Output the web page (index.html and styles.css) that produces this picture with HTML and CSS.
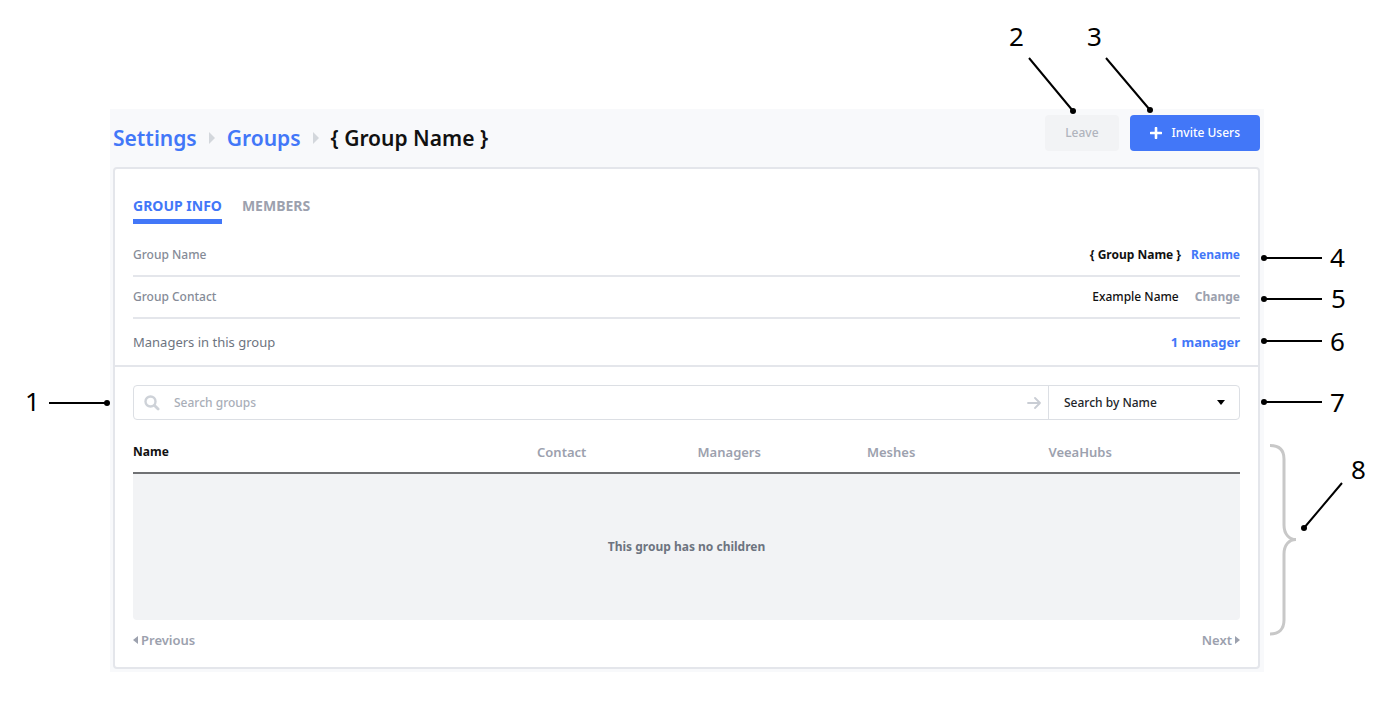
FILE: index.html
```
<!DOCTYPE html>
<html lang="en">
<head>
    <meta charset="UTF-8">
    <meta name="viewport" content="width=device-width, initial-scale=1.0">
    <title>Group settings</title>
    <link rel="stylesheet" href="styles.css">
</head>
<body>
    <main class="page">
        <header class="topbar">
            <nav class="breadcrumb" aria-label="Breadcrumb">
                <a href="#settings">Settings</a>
                <svg class="crumb-arrow" width="6" height="12" viewBox="0 0 6 12"><path d="M0 0l6 6-6 6z"/></svg>
                <a href="#groups">Groups</a>
                <svg class="crumb-arrow" width="6" height="12" viewBox="0 0 6 12"><path d="M0 0l6 6-6 6z"/></svg>
                <h1>{ Group Name }</h1>
            </nav>
            <div class="actions">
                <button type="button" class="btn btn-leave" disabled>Leave</button>
                <button type="button" class="btn btn-invite">
                    <svg width="12" height="12" viewBox="0 0 12 12"><path d="M6 1v10M1 6h10" stroke="#fff" stroke-width="2.6" stroke-linecap="round"/></svg>
                    Invite Users
                </button>
            </div>
        </header>

        <section class="card">
            <nav class="tabs">
                <a href="#info" class="tab active">GROUP INFO</a>
                <a href="#members" class="tab">MEMBERS</a>
            </nav>

            <div class="info">
                <div class="info-row">
                    <span class="info-label">Group Name</span>
                    <span class="info-value"><b>{ Group Name }</b><a href="#rename">Rename</a></span>
                </div>
                <div class="info-row contact">
                    <span class="info-label">Group Contact</span>
                    <span class="info-value"><span>Example Name</span><a href="#change" class="muted">Change</a></span>
                </div>
                <div class="info-row managers">
                    <span class="info-label">Managers in this group</span>
                    <span class="info-value"><a href="#managers">1 manager</a></span>
                </div>
            </div>

            <div class="groups">
                <form class="search">
                    <svg class="search-icon" width="16" height="16" viewBox="0 0 16 16" fill="none" stroke="#ced2d8" stroke-linecap="round"><circle cx="6.5" cy="6.5" r="5" stroke-width="2.4"/><path d="M10.5 10.5l3.600 3.600" stroke-width="2.8"/></svg>
                    <input type="text" placeholder="Search groups" aria-label="Search groups">
                    <button type="submit" class="search-go" aria-label="Search">
                        <svg width="14" height="12" viewBox="0 0 14 12" fill="none" stroke="#c9cdd4" stroke-width="1.8" stroke-linecap="round" stroke-linejoin="round"><path d="M1 6h12M8 1l5 5-5 5"/></svg>
                    </button>
                    <div class="search-by">
                        <select aria-label="Search by">
                            <option>Search by Name</option>
                        </select>
                        <svg width="8" height="5" viewBox="0 0 8 5"><path d="M0 0h8L4 5z"/></svg>
                    </div>
                </form>

                <table>
                    <thead>
                        <tr>
                            <th class="col-name">Name</th>
                            <th class="col-contact">Contact</th>
                            <th class="col-managers">Managers</th>
                            <th class="col-meshes">Meshes</th>
                            <th>VeeaHubs</th>
                        </tr>
                    </thead>
                    <tbody>
                        <tr><td colspan="5">This group has no children</td></tr>
                    </tbody>
                </table>

                <div class="pager">
                    <button type="button"><svg width="5" height="8" viewBox="0 0 5 8"><path d="M5 0v8L0 4z"/></svg>Previous</button>
                    <button type="button">Next<svg width="5" height="8" viewBox="0 0 5 8"><path d="M0 0v8l5-4z"/></svg></button>
                </div>
            </div>
        </section>

        <!-- numbered callouts -->
        <svg class="callouts callouts-left" width="110" height="600" viewBox="0 0 110 600">
            <path d="M49 294h58"/>
            <circle cx="107" cy="294" r="3"/>
            <text x="25" y="302">1</text>
        </svg>
        <svg class="callouts callouts-right" width="400" height="660" viewBox="986 10 400 660">
            <path d="M1029 58l44 53M1106 58l44 52M1264 258h58M1264 299h58M1264 341h58M1264 402h58M1304 528l38-45"/>
            <circle cx="1073" cy="111" r="3"/>
            <circle cx="1150" cy="110" r="3"/>
            <circle cx="1264" cy="258" r="3"/>
            <circle cx="1264" cy="299" r="3"/>
            <circle cx="1264" cy="341" r="3"/>
            <circle cx="1264" cy="402" r="3"/>
            <circle cx="1304" cy="528" r="3"/>
            <path class="brace" d="M1270 445.500C1279 445.500 1284 450 1284 459V525C1284 534 1289 539.500 1296 539.500C1289 539.500 1284 545 1284 554V620C1284 629 1279 634 1270 634"/>
            <text x="1009" y="46">2</text>
            <text x="1087" y="46">3</text>
            <text x="1330" y="267">4</text>
            <text x="1331" y="308">5</text>
            <text x="1330" y="351">6</text>
            <text x="1330" y="412">7</text>
            <text x="1351" y="479">8</text>
        </svg>
    </main>
</body>
</html>
```
FILE: styles.css
```
* { box-sizing: border-box; }
body { margin: 0; background: #fff; color: #111; font: 500 12px/20px "Noto Sans", "Open Sans", sans-serif; }
a { color: #4277f8; text-decoration: none; }
button, input, select { font: inherit; }
button { cursor: pointer; }

.page { position: relative; margin: 109px 122px 40px 110px; padding: 0 4px 3px 3px; background: #f8f9fb; }

.topbar { display: flex; justify-content: space-between; height: 58px; padding-top: 6px; }
.breadcrumb { display: flex; align-items: center; gap: 12px; height: 46px; font-size: 21px; font-weight: 600; }
.breadcrumb h1 { margin: 0; font: inherit; color: #111; }
.crumb-arrow { fill: #d3d7dc; }
.actions { display: flex; align-items: flex-start; gap: 11px; }
.btn { display: flex; align-items: center; justify-content: center; gap: 10px; height: 36px; padding: 0 20px; border: none; border-radius: 4px; }
.btn-leave { background: #f2f3f5; color: #b0b4bd; }
.btn-invite { background: #4277f8; color: #fff; }

.card { background: #fff; border: 2px solid #e4e6eb; border-radius: 4px; }

.tabs { display: flex; gap: 20px; padding: 27px 18px 0; }
.tab { padding-bottom: 3px; border-bottom: 5px solid transparent; font-size: 14px; font-weight: 700; color: #9ca1ae; }
.tab.active { color: #4277f8; border-color: #4277f8; }

.info { padding: 11px 18px 0; border-bottom: 2px solid #e4e6eb; }
.info-row { display: flex; justify-content: space-between; align-items: center; height: 42px; border-bottom: 2px solid #e4e6eb; }
.info-row.managers { height: 46px; border-bottom: none; font-size: 13px; }
.info-label { color: #858b97; }
.managers .info-label { font-weight: 400; color: #6d7480; }
.info-value { display: flex; gap: 10px; }
.info-value a, .info-value b { font-weight: 700; }
.contact .info-value { gap: 16px; }
.info-value .muted { color: #9ca1ae; }

.groups { padding: 18px 18px 17px; }
.search { display: flex; align-items: center; height: 35px; border: 1px solid #dcdfe4; border-radius: 4px; }
.search-icon { flex: none; margin-left: 10px; }
.search input { flex: 1; min-width: 0; padding: 0 14px; border: none; outline: none; background: none; }
.search input::placeholder { color: #a9aeb8; opacity: 1; }
.search-go { display: flex; padding: 7px; border: none; background: none; }
.search-by { position: relative; display: flex; align-items: center; width: 191px; height: 100%; border-left: 1px solid #dcdfe4; }
.search-by select { width: 100%; height: 100%; padding: 0 30px 0 15px; border: none; background: none; color: #22252a; appearance: none; }
.search-by svg { position: absolute; right: 14px; pointer-events: none; }

table { width: 100%; margin-top: 12px; border-collapse: separate; border-spacing: 0; table-layout: fixed; }
th { height: 42px; padding: 0; border-bottom: 2px solid #707174; text-align: left; font-size: 13px; font-weight: 600; color: #9ca1ae; }
.col-name { width: 36.5%; font-size: 12px; font-weight: 700; color: #111; }
.col-contact { width: 14.5%; }
.col-managers { width: 15.3%; }
.col-meshes { width: 16.4%; }
td { height: 146px; padding: 0; background: #f2f3f5; border-radius: 0 0 4px 4px; text-align: center; font-size: 12px; font-weight: 700; color: #6d7480; }

.pager { display: flex; justify-content: space-between; margin-top: 10px; font-size: 13px; }
.pager button { display: flex; align-items: center; gap: 3px; padding: 0; border: none; background: none; font-weight: 600; color: #9ca1ae; }
.pager svg { fill: #9ca1ae; }

.callouts { position: absolute; pointer-events: none; overflow: visible; }
.callouts-left { left: -110px; top: 0; }
.callouts-right { right: -122px; top: -99px; }
.callouts path { fill: none; stroke: #000; stroke-width: 2; }
.callouts .brace { stroke: #c8c8c8; stroke-width: 3; }
.callouts text { font-size: 26px; font-weight: 400; }
```
